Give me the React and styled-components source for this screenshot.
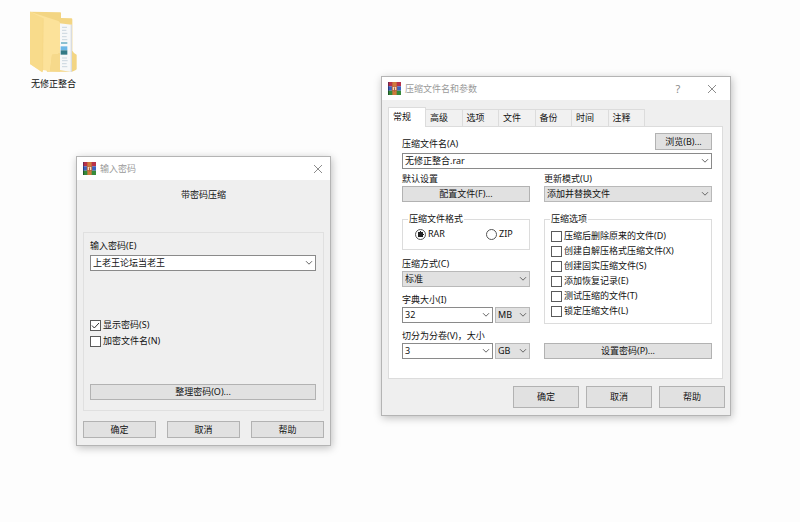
import React from 'react';
import styled, { createGlobalStyle } from 'styled-components';

const GlobalStyle = createGlobalStyle`
  * {
    box-sizing: border-box;
  }
  body {
    margin: 0;
    background: #fdfdfd;
    color: #111;
    font: 9px/12px "Noto Sans", "Noto Sans CJK SC", sans-serif;
  }
  button, input, select {
    margin: 0;
    font: inherit;
    color: inherit;
  }
`;

const Desktop = styled.main`
  position: relative;
  min-height: 100vh;
  padding: 8px 27px;
`;

const Shortcut = styled.button`
  display: flex;
  flex-direction: column;
  align-items: center;
  gap: 3px;
  padding: 0;
  border: 0;
  background: none;
`;

const Window = styled.section`
  position: absolute;
  left: ${({ $x }) => $x}px;
  top: ${({ $y }) => $y}px;
  width: ${({ $width }) => $width}px;
  border: 1px solid #b4b4b4;
  background: #efefef;
  box-shadow: 1px 2px 8px rgba(0, 0, 0, 0.25);
`;

const TitleBar = styled.header`
  display: flex;
  align-items: center;
  gap: 4px;
  height: 23px;
  padding: 0 ${({ $right }) => $right || 6}px 0 6px;
  background: #fff;
  color: #9a9a9a;
`;

const Title = styled.h1`
  flex: 1;
  margin: 0;
  font: inherit;
`;

const TitleButton = styled.button`
  display: flex;
  align-items: center;
  justify-content: center;
  width: 12px;
  height: 12px;
  padding: 0;
  border: 0;
  background: none;
  color: #8c8c8c;
  font-size: 11px;
  margin-left: ${({ $spaced }) => $spaced ? 18 : 0}px;
`;

const PasswordBody = styled.form`
  padding: 9px 6px 7px;
`;

const Heading = styled.h2`
  margin: 0 0 31px;
  font: inherit;
  text-align: center;
`;

const Frame = styled.fieldset`
  display: flex;
  flex-direction: column;
  min-width: 0;
  margin: 0 0 10px;
  padding: 7px 7px 10px 6px;
  border: 1px solid #e0e0e0;
`;

const Group = styled.fieldset`
  min-width: 0;
  margin: 4px 0 ${({ $last }) => $last ? 0 : 1}px;
  padding: ${({ $last }) => $last ? '5px 5px 6px' : '3px 5px 9px'};
  border: 1px solid #dcdcdc;
`;

const Legend = styled.legend`
  padding: 0 1px;
`;

const Field = styled.div`
  display: flex;
  flex-direction: column;
  gap: ${({ $gap }) => $gap || 1}px;
`;

const FieldRow = styled.div`
  display: flex;
  gap: 2px;
`;

const Combo = styled.div`
  display: flex;
  flex: 1;
  height: 16px;
  min-width: 0;
  border: 1px solid #8a8a8a;
  background: #fff;
`;

const ComboInput = styled.input`
  flex: 1;
  width: 0;
  min-width: 0;
  padding: 0 2px;
  border: 0;
  outline: 0;
  background: none;
`;

const ComboButton = styled.button`
  display: flex;
  align-items: center;
  justify-content: center;
  width: 13px;
  padding: 0;
  border: 0;
  background: none;
`;

const SelectWrap = styled.div`
  display: grid;
  align-items: center;
  width: ${({ $width }) => $width || '100%'};
  height: 16px;

  select, svg {
    grid-area: 1 / 1;
  }
  svg {
    justify-self: end;
    margin-right: 3px;
    pointer-events: none;
  }
`;

const NativeSelect = styled.select`
  width: 100%;
  height: 16px;
  padding: 0 2px;
  border: 1px solid #b9b9b9;
  border-radius: 0;
  background: #e1e1e1;
  appearance: none;
`;

const PushButton = styled.button`
  flex: ${({ $grow }) => $grow ? 1 : 'none'};
  width: ${({ $width }) => $width || 'auto'};
  height: ${({ $height }) => $height || 16}px;
  padding: 0;
  border: 1px solid #b2b2b2;
  background: #e1e1e1;
  line-height: 12px;
`;

const CheckLabel = styled.label`
  display: flex;
  align-items: center;
  gap: 2px;
  height: 12px;
  white-space: nowrap;
`;

const CheckMark = styled.span`
  display: grid;
  width: 11px;
  height: 11px;

  input, svg {
    grid-area: 1 / 1;
  }
  input {
    width: 11px;
    height: 11px;
    border: 1px solid #5a5a5a;
    background: #fff;
    appearance: none;
  }
  svg {
    visibility: hidden;
    pointer-events: none;
  }
  input:checked + svg {
    visibility: visible;
  }
`;

const Radio = styled.input`
  width: 11px;
  height: 11px;
  border: 1px solid #555;
  border-radius: 50%;
  background: #fff;
  appearance: none;

  &:checked {
    background: radial-gradient(circle, #222 0 3px, #fff 3px);
  }
`;

const Checks = styled.div`
  display: flex;
  flex-direction: column;
  gap: ${({ $gap }) => $gap}px;
  margin: ${({ $margin }) => $margin || '0 1px'};
`;

const Radios = styled.div`
  display: grid;
  grid-template-columns: 71px 1fr;
  padding-left: 7px;
`;

const Actions = styled.div`
  display: flex;
  justify-content: flex-end;
  gap: ${({ $gap }) => $gap}px;
`;

const ArchiveBody = styled.form`
  padding: 7px 5px 7px 6px;
`;

const Tabs = styled.div`
  display: flex;
  align-items: flex-end;
  width: 257px;
  height: 19px;
`;

const Tab = styled.button`
  position: relative;
  flex: 1;
  height: 17px;
  padding: 0 4px;
  border: 1px solid #dcdcdc;
  border-width: 1px 1px 0 0;
  background: #f1f1f1;
  text-align: left;

  &[aria-selected='true'] {
    flex: none;
    z-index: 1;
    width: 38px;
    height: 20px;
    margin-bottom: -1px;
    padding-bottom: 2px;
    border-left-width: 1px;
    background: #fff;
  }
`;

const Panel = styled.div`
  margin: 0 2px 7px 0;
  padding: 6px 10px 19px 13px;
  border: 1px solid #dcdcdc;
  background: #fff;
`;

const NameRow = styled.div`
  display: flex;
  align-items: flex-end;
  justify-content: space-between;
  margin-bottom: 3px;
`;

const Columns = styled.div`
  display: grid;
  grid-template-columns: minmax(0, 128fr) minmax(0, 168fr);
  gap: 14px;
  margin-top: 4px;
`;

const Column = styled.div`
  display: flex;
  flex-direction: column;
  gap: 7px;

  > button {
    margin-top: auto;
  }
`;

const Chevron = () => (
  <svg width="8" height="6" viewBox="0 0 8 6" aria-hidden="true">
    <path d="M1 1.2 4 4.2 7 1.2" fill="none" stroke="#666" />
  </svg>
);

const Cross = () => (
  <svg width="10" height="10" viewBox="0 0 10 10" aria-hidden="true">
    <path d="M1 1 9 9M9 1 1 9" fill="none" stroke="#8c8c8c" />
  </svg>
);

const FolderIcon = () => (
  <svg width="53" height="67" viewBox="0 0 159 201" aria-hidden="true">
    <path d="M9 11 100 13q2 0 2 3v14l31 1q3 0 3 4v93l5 7 8 5v44l-4 3-10 4H60Z" fill="#f3d583" />
    <path d="M97 46 134 50V192L97 186Z" fill="#f6f8f9" />
    <path d="M131 50h4v142h-4Z" fill="#d9dcdf" />
    <path d="M105 58h15M105 67h13M105 76h16M105 86h14M105 95h16M105 150h15M105 158h17M105 167h14M105 176h16" stroke="#b3c6d1" strokeWidth="2" />
    <path d="M102 105h19" stroke="#55a3bd" strokeWidth="4" />
    <path d="M101 115h20v12h-20Z" fill="#6cb7e6" />
    <path d="M101 127h20v13h-20Z" fill="#327a86" />
    <path d="M9 11 94 39q5 2 5 7v87l-6 5-18 2-6 50-21-4-3 7L9 168Z" fill="#fce29a" />
    <path d="M99 133v58l-30-2 6-49 18-2Z" fill="#f6d98b" />
    <path d="M9 11 49 31 47 193 9 168Z" fill="#f8db8b" />
    <path d="M49 31 47 189" stroke="#efcd78" />
  </svg>
);

const RarIcon = () => (
  <svg width="13" height="13" viewBox="0 0 12 12" aria-hidden="true">
    <path d="M0 0h12v4H0Z" fill="#b8324a" />
    <path d="M0 4h12v4H0Z" fill="#3c62c0" />
    <path d="M0 8h12v4H0Z" fill="#368a3a" />
    <path d="M0 0h1v4H0Z" fill="#6f2750" />
    <path d="M0 4h1v4H0Z" fill="#253a80" />
    <path d="M0 8h1v4H0Z" fill="#1f5727" />
    <path d="M4 0h4v12H4Z" fill="#cf7a3c" />
    <path d="M3.5 4h5v4h-5Z" fill="#b4552c" />
    <path d="M4.3 4.5h3.4v3H4.3Z" fill="#f2dcc4" />
    <path d="M5.5 5h1v4h-1Z" fill="#b5633c" />
  </svg>
);

function ComboBox({ id, value }) {
  return (
    <Combo>
      <ComboInput id={id} defaultValue={value} />
      <ComboButton type="button" aria-label="展开">
        <Chevron />
      </ComboButton>
    </Combo>
  );
}

function Select({ value, width, ...props }) {
  return (
    <SelectWrap $width={width}>
      <NativeSelect {...props}>
        <option>{value}</option>
      </NativeSelect>
      <Chevron />
    </SelectWrap>
  );
}

function Check({ label, checked }) {
  return (
    <CheckLabel>
      <CheckMark>
        <input type="checkbox" defaultChecked={checked} />
        <svg width="11" height="11" viewBox="0 0 11 11" aria-hidden="true">
          <path d="M2 5.5 4.3 8 9 3" fill="none" stroke="#333" />
        </svg>
      </CheckMark>
      {label}
    </CheckLabel>
  );
}

const TABS = ['常规', '高级', '选项', '文件', '备份', '时间', '注释'];

const OPTIONS = [
  '压缩后删除原来的文件(D)',
  '创建自解压格式压缩文件(X)',
  '创建固实压缩文件(S)',
  '添加恢复记录(E)',
  '测试压缩的文件(T)',
  '锁定压缩文件(L)',
];

const ACTIONS = ['确定', '取消', '帮助'];

function PasswordWindow() {
  return (
    <Window $x={76} $y={156} $width={255}>
      <TitleBar>
        <RarIcon />
        <Title>输入密码</Title>
        <TitleButton aria-label="关闭"><Cross /></TitleButton>
      </TitleBar>
      <PasswordBody>
        <Heading>带密码压缩</Heading>
        <Frame>
          <Field $gap={3}>
            <label htmlFor="password">输入密码(E)</label>
            <FieldRow>
              <ComboBox id="password" value="上老王论坛当老王" />
            </FieldRow>
          </Field>
          <Checks $gap={4} $margin="48px 0 37px">
            <Check label="显示密码(S)" checked />
            <Check label="加密文件名(N)" />
          </Checks>
          <PushButton type="button">整理密码(O)...</PushButton>
        </Frame>
        <Actions $gap={11}>
          {ACTIONS.map((label) => (
            <PushButton key={label} type="button" $grow $height={17}>{label}</PushButton>
          ))}
        </Actions>
      </PasswordBody>
    </Window>
  );
}

function ArchiveWindow() {
  return (
    <Window $x={381} $y={76} $width={350}>
      <TitleBar $right={12}>
        <RarIcon />
        <Title>压缩文件名和参数</Title>
        <TitleButton aria-label="帮助">?</TitleButton>
        <TitleButton aria-label="关闭" $spaced><Cross /></TitleButton>
      </TitleBar>
      <ArchiveBody>
        <Tabs role="tablist">
          {TABS.map((tab, i) => (
            <Tab key={tab} type="button" role="tab" aria-selected={i === 0}>{tab}</Tab>
          ))}
        </Tabs>
        <Panel role="tabpanel">
          <NameRow>
            <label htmlFor="archive">压缩文件名(A)</label>
            <PushButton type="button" $width="57px" $height={17}>浏览(B)...</PushButton>
          </NameRow>
          <FieldRow>
            <ComboBox id="archive" value="无修正整合.rar" />
          </FieldRow>
          <Columns>
            <Column>
              <Field>
                <span>默认设置</span>
                <PushButton type="button">配置文件(F)...</PushButton>
              </Field>
              <Group>
                <Legend>压缩文件格式</Legend>
                <Radios>
                  <CheckLabel>
                    <Radio type="radio" name="format" defaultChecked />
                    RAR
                  </CheckLabel>
                  <CheckLabel>
                    <Radio type="radio" name="format" />
                    ZIP
                  </CheckLabel>
                </Radios>
              </Group>
              <Field>
                <label htmlFor="method">压缩方式(C)</label>
                <Select id="method" value="标准" />
              </Field>
              <Field>
                <label htmlFor="dictionary">字典大小(I)</label>
                <FieldRow>
                  <ComboBox id="dictionary" value="32" />
                  <Select value="MB" width="35px" aria-label="字典单位" />
                </FieldRow>
              </Field>
              <Field>
                <label htmlFor="volume">切分为分卷(V)，大小</label>
                <FieldRow>
                  <ComboBox id="volume" value="3" />
                  <Select value="GB" width="35px" aria-label="分卷单位" />
                </FieldRow>
              </Field>
            </Column>
            <Column>
              <Field>
                <label htmlFor="mode">更新模式(U)</label>
                <Select id="mode" value="添加并替换文件" />
              </Field>
              <Group $last>
                <Legend>压缩选项</Legend>
                <Checks $gap={3}>
                  {OPTIONS.map((label) => (
                    <Check key={label} label={label} />
                  ))}
                </Checks>
              </Group>
              <PushButton type="button">设置密码(P)...</PushButton>
            </Column>
          </Columns>
        </Panel>
        <Actions $gap={7}>
          {ACTIONS.map((label) => (
            <PushButton key={label} type="button" $width="66px" $height={22}>{label}</PushButton>
          ))}
        </Actions>
      </ArchiveBody>
    </Window>
  );
}

export default function App() {
  return (
    <>
      <GlobalStyle />
      <Desktop>
        <Shortcut>
          <FolderIcon />
          无修正整合
        </Shortcut>
        <PasswordWindow />
        <ArchiveWindow />
      </Desktop>
    </>
  );
}
